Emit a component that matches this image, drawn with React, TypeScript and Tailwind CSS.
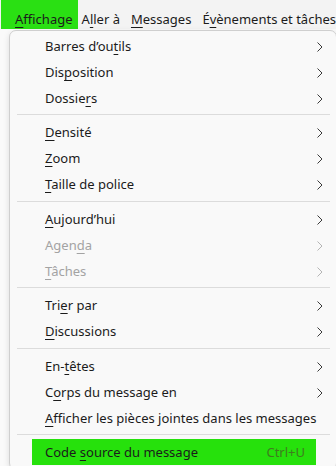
import React from "react";

type Item = { label: React.ReactNode; sub?: boolean; disabled?: boolean; shortcut?: string; hl?: boolean } | "sep";

const U = ({ children }: { children: React.ReactNode }) => (
  <span className="underline decoration-1 underline-offset-[3px]">{children}</span>
);

const Chevron = ({ disabled }: { disabled?: boolean }) => (
  <svg width="6" height="10" viewBox="0 0 6 10" className="shrink-0">
    <polyline points="0.5,0.5 5,5 0.5,9.5" fill="none" stroke={disabled ? "#b4b4b4" : "#3a3a3a"} strokeWidth="1" />
  </svg>
);

const items: Item[] = [
  { label: <>Barres d’ou<U>t</U>ils</>, sub: true },
  { label: <>Dis<U>p</U>osition</>, sub: true },
  { label: <>Dossie<U>r</U>s</>, sub: true },
  "sep",
  { label: <><U>D</U>ensité</>, sub: true },
  { label: <><U>Z</U>oom</>, sub: true },
  { label: <><U>T</U>aille de police</>, sub: true },
  "sep",
  { label: <><U>A</U>ujourd’hui</>, sub: true },
  { label: <>Agen<U>d</U>a</>, sub: true, disabled: true },
  { label: <><U>T</U>âches</>, sub: true, disabled: true },
  "sep",
  { label: <>Tri<U>e</U>r par</>, sub: true },
  { label: <><U>D</U>iscussions</>, sub: true },
  "sep",
  { label: <>En-<U>t</U>êtes</>, sub: true },
  { label: <>C<U>o</U>rps du message en</>, sub: true },
  { label: <><U>A</U>fficher les pièces jointes dans les messages</> },
  "sep",
  { label: <>Code <U>s</U>ource du message</>, shortcut: "Ctrl+U", hl: true },
];

export default function App() {
  return (
    <div
      className="relative w-[336px] h-[466px] overflow-hidden bg-[#fafafa] text-[#1b1b1b]"
      style={{ fontFamily: '"Noto Sans", "Open Sans", sans-serif' }}
    >
      {/* menubar */}
      <div className="h-[29px] bg-[#f3f3f3] flex items-stretch text-[13px] leading-none whitespace-nowrap">
        <div className="bg-[#2ae013] w-[80px] ml-[1px] flex items-center pl-[14px]">
          <span className="pt-[9px]"><U>A</U>ffichage</span>
        </div>
        <div className="flex items-center pl-[4px] pt-[9px] gap-[11px]">
          <span>A<U>l</U>ler à</span>
          <span><U>M</U>essages</span>
          <span>É<U>v</U>ènements et tâches</span>
        </div>
      </div>

      {/* dropdown */}
      <div className="absolute left-[9px] top-[30px] w-[328px] h-[440px] bg-[#f9f9f9] border border-[#cfcfcf] rounded-[7px] shadow-[0_2px_6px_rgba(0,0,0,0.12)] pt-[1.5px] text-[13px] whitespace-nowrap">
        {items.map((it, i) =>
          it === "sep" ? (
            <div key={i} className="h-[8.5px] flex items-center pl-[7px] pr-[6px]">
              <div className="h-[1px] w-full bg-[#dcdcdc]" />
            </div>
          ) : (
            <div key={i} className="h-[26px] flex items-center">
              <div
                className={
                  "h-full flex items-center pt-[2px] " +
                  (it.hl ? "bg-[#26e10c] ml-[22px] w-[284px] pl-[13px] pr-[11px]" : "pl-[35px] pr-[13px] w-full")
                }
              >
                <span className={"flex-1 " + (it.disabled ? "text-[#a3a3a3]" : "")}>{it.label}</span>
                {it.shortcut && <span className="text-[#3f7d1f]">{it.shortcut}</span>}
                {it.sub && <Chevron disabled={it.disabled} />}
              </div>
            </div>
          )
        )}
      </div>
    </div>
  );
}
